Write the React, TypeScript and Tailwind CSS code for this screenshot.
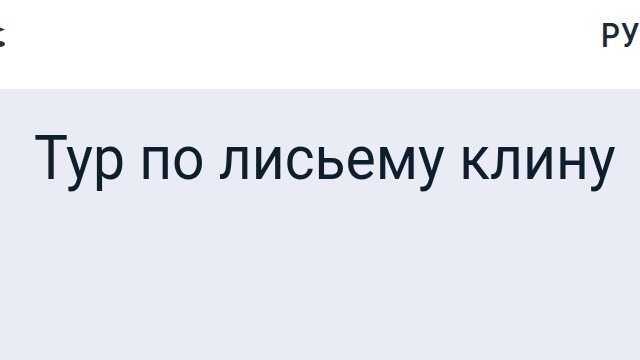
export default function App() {
  return (
    <div className="w-[640px] h-[360px] overflow-hidden bg-[#e9ecf5] flex flex-col" style={{ fontFamily: 'Roboto, "Noto Sans", sans-serif' }}>
      <header className="h-[89px] bg-white flex items-start justify-between shrink-0">
        <svg width="8" height="30" viewBox="0 0 8 30" className="mt-[22px]">
          <path d="M-6 3 L5 7.5 L-6 12 Z" fill="#2a3340" />
          <ellipse cx="0" cy="22" rx="5" ry="3" fill="#2a3340" />
        </svg>
        <div className="mt-[18px] mr-[-6px] text-[34px] font-medium text-[#1f2a37] leading-none tracking-[1px] origin-left scale-x-[0.87]">РУ</div>
      </header>
      <main className="flex-1 pl-[34px] pt-[38px]">
        <h1 className="text-[62px] leading-none text-[#0f1e2d] font-normal whitespace-nowrap origin-left scale-x-[0.92]">Тур по лисьему клину</h1>
      </main>
    </div>
  );
}
